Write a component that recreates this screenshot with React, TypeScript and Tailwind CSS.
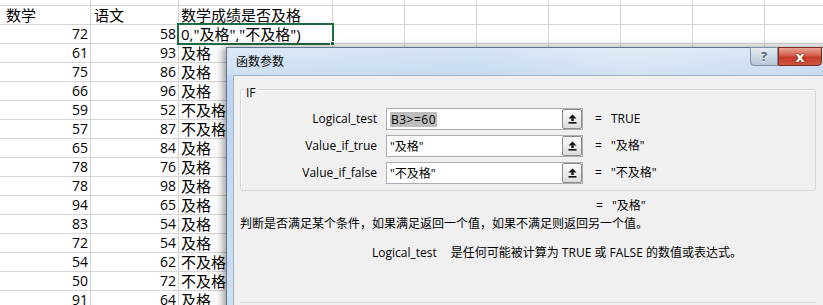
const data: [number, number, string][] = [
  [72, 58, '0,"及格","不及格")'],
  [61, 93, '及格'],
  [75, 86, '及格'],
  [66, 96, '及格'],
  [59, 52, '不及格'],
  [57, 87, '不及格'],
  [65, 84, '及格'],
  [78, 76, '及格'],
  [78, 98, '及格'],
  [94, 65, '及格'],
  [83, 54, '及格'],
  [72, 54, '及格'],
  [54, 62, '不及格'],
  [50, 72, '不及格'],
  [91, 64, '及格'],
];

const extraCols = [0, 1, 2, 3, 4, 5];

function SheetRow({ a, b, c, head, tall = true }: { a?: React.ReactNode; b?: React.ReactNode; c?: React.ReactNode; head?: boolean; tall?: boolean }) {
  return (
    <div className={tall ? 'flex h-[19px] shrink-0 border-b border-[#d4d4d4]' : 'flex h-[6px] shrink-0 border-b border-[#d4d4d4]'}>
      <div className={head ? 'w-[91px] shrink-0 border-r border-[#d4d4d4] pl-[6px] text-[15px] leading-[18px] text-left' : 'w-[91px] shrink-0 border-r border-[#d4d4d4] pr-[2px] text-[14px] leading-[18px] text-right'}>{a}</div>
      <div className={head ? 'w-[88px] shrink-0 border-r border-[#d4d4d4] pl-[3px] text-[15px] leading-[18px] text-left' : 'w-[88px] shrink-0 border-r border-[#d4d4d4] pr-[2px] text-[14px] leading-[18px] text-right'}>{b}</div>
      <div className="w-[154px] shrink-0 border-r border-[#d4d4d4] pl-[2px] text-[15px] leading-[18px] whitespace-nowrap">{c}</div>
      {extraCols.map((i) => (
        <div key={i} className="w-[72px] shrink-0 border-r border-[#d4d4d4]" />
      ))}
    </div>
  );
}

function UpButton() {
  return (
    <div className="ml-auto w-[20px] h-full rounded-[2px] border border-[#8a8a8a] bg-[linear-gradient(to_bottom,#fbfbfb,#ececec_50%,#dcdcdc)] flex items-center justify-center">
      <svg width="9" height="10" viewBox="0 0 9 10">
        <polygon points="4.5,0.5 8.5,4.5 0.5,4.5" fill="#111" />
        <rect x="3.3" y="4.4" width="2.4" height="2.6" fill="#111" />
        <rect x="0.5" y="8" width="8" height="1.6" fill="#111" />
      </svg>
    </div>
  );
}

function ArgRow({ label, value, result, selected }: { label: string; value: string; result: string; selected?: boolean }) {
  return (
    <div className="flex items-center h-[22px]">
      <div className="w-[136px] text-right whitespace-nowrap">{label}</div>
      <div className="ml-[9px] w-[197px] h-[22px] border border-[#abadb3] bg-white flex items-center">
        <span className={selected ? 'ml-[3px] bg-[#bdbdbd] leading-[15px] px-[1px] tracking-[0.5px]' : 'ml-[3px] leading-[15px]'}>{value}</span>
        <UpButton />
      </div>
      <div className="ml-[12px] w-[16px]">=</div>
      <div className="whitespace-nowrap">{result}</div>
    </div>
  );
}

export default function App() {
  return (
    <div
      className="relative w-[823px] h-[305px] overflow-hidden bg-white text-black"
      style={{ fontFamily: '"Open Sans", "Noto Sans CJK SC", sans-serif' }}
    >
      {/* worksheet */}
      <div className="flex flex-col">
        <SheetRow tall={false} />
        <SheetRow head a="数学" b="语文" c="数学成绩是否及格" />
        {data.map(([a, b, c], i) => (
          <SheetRow key={i} a={a} b={b} c={c} />
        ))}
      </div>

      {/* active cell */}
      <div className="absolute left-[177px] top-[23px] w-[157px] h-[22px] border-2 border-[#1f6b40]" />
      <div className="absolute left-[330px] top-[41px] w-[5px] h-[5px] bg-[#1f6b40] border border-white" />

      {/* dialog window */}
      <div className="absolute left-[226px] top-[47px] w-[620px] h-[275px] border border-[#61758f] bg-[linear-gradient(to_bottom,#d6e5f5,#bed5ee_40px,#cfe0f3)] shadow-[-3px_0_8px_rgba(0,0,0,0.4)] flex flex-col text-[12px]">
        <div className="relative h-[27px] shrink-0 flex items-center pl-[9px] bg-[linear-gradient(to_right,rgba(255,255,255,0.15),rgba(255,255,255,0)_40%,rgba(255,255,255,0.25)_65%,rgba(255,255,255,0))]">
          <span>函数参数</span>
          <div className="absolute left-[523px] top-[-1px] w-[28px] h-[19px] rounded-bl-[4px] border border-[#7e8fa6] bg-[linear-gradient(to_bottom,#e6edf5,#ccd7e4_50%,#b6c6d8)] flex items-center justify-center text-[13px] font-bold text-[#4f5f75] [text-shadow:0_1px_0_#ffffff]">
            ?
          </div>
          <div className="absolute left-[551px] top-[-1px] w-[44px] h-[19px] rounded-br-[4px] border border-[#7b2a22] bg-[linear-gradient(to_bottom,#e9a796,#d35a47_45%,#c23a27_55%,#d1553e)] flex items-center justify-center">
            <span className="text-[15px] font-bold leading-none text-white [text-shadow:0_0_2px_#5a1a10]">x</span>
          </div>
        </div>
        <div className="ml-[6px] flex-1 border border-[#9fb3cb] bg-[#f0f0f0] flex flex-col">
          {/* group box */}
          <div className="relative ml-[6px] mt-[13px] w-[576px] h-[102px] shrink-0 rounded-[3px] border border-[#d0d9df] shadow-[inset_1px_1px_0_#ffffff] pt-[18px] flex flex-col gap-[5px]">
            <span className="absolute left-[3px] top-[-3px] px-[2px] bg-[#f0f0f0] leading-[12px]">IF</span>
            <ArgRow label="Logical_test" value="B3>=60" result="TRUE" selected />
            <ArgRow label="Value_if_true" value={'"及格"'} result={'"及格"'} />
            <ArgRow label="Value_if_false" value={'"不及格"'} result={'"不及格"'} />
          </div>
          <div className="flex mt-[8px] pl-[362px] leading-[14px]">
            <span className="w-[16px]">=</span>
            <span>"及格"</span>
          </div>
          <div className="mt-[4px] pl-[6px] leading-[14px] whitespace-nowrap">
            判断是否满足某个条件，如果满足返回一个值，如果不满足则返回另一个值。
          </div>
          <div className="mt-[15px] pl-[138px] leading-[14px] flex whitespace-nowrap">
            <span>Logical_test</span>
            <span className="ml-[14px]">是任何可能被计算为 TRUE 或 FALSE 的数值或表达式。</span>
          </div>
          <div className="mt-[42px] ml-[6px] w-[576px] border-t border-[#d5dfe5]" />
        </div>
      </div>
    </div>
  );
}
